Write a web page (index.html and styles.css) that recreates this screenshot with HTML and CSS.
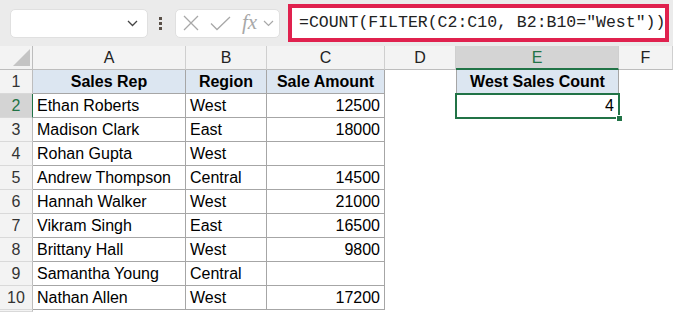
FILE: index.html
```html
<!DOCTYPE html>
<html lang="en">
<head>
  <meta charset="UTF-8">
  <meta name="viewport" content="width=device-width, initial-scale=1.0">
  <title>COUNT with FILTER</title>
  <link rel="stylesheet" href="styles.css">
</head>
<body>
  <div class="toolbar">
    <div class="name-box">
      <svg class="chev" width="11" height="7" viewBox="0 0 11 7"><path d="M1 1l4.5 4.5L10 1" fill="none" stroke="#444" stroke-width="1.3"/></svg>
    </div>
    <div class="grip"><span></span><span></span><span></span></div>
    <div class="fx-box">
      <svg width="16" height="16" viewBox="0 0 16 16"><path d="M1 1l14 14M15 1L1 15" fill="none" stroke="#a8a8a8" stroke-width="1.3"/></svg>
      <svg width="21" height="15" viewBox="0 0 21 15"><path d="M1 7.5l6 6L20 1" fill="none" stroke="#a8a8a8" stroke-width="1.3"/></svg>
      <span class="fx">fx</span>
      <svg width="11" height="7" viewBox="0 0 11 7"><path d="M1 1l4.5 4.5L10 1" fill="none" stroke="#a8a8a8" stroke-width="1.2"/></svg>
    </div>
    <div class="formula"><span class="formula-text">=COUNT(FILTER(C2:C10, B2:B10="West"))</span></div>
  </div>

  <div class="sheet">
    <div class="hdr corner"><span class="tri"></span></div>
    <div class="hdr">A</div>
    <div class="hdr">B</div>
    <div class="hdr">C</div>
    <div class="hdr">D</div>
    <div class="hdr active">E</div>
    <div class="hdr">F</div>

    <div class="rh">1</div>
    <div class="c b th">Sales Rep</div>
    <div class="c b th">Region</div>
    <div class="c b th">Sale Amount</div>
    <div class="c"></div>
    <div class="c b bl th">West Sales Count</div>
    <div class="c"></div>

    <div class="rh active">2</div>
    <div class="c b">Ethan Roberts</div>
    <div class="c b">West</div>
    <div class="c b num">12500</div>
    <div class="c"></div>
    <div class="c b bl num selected">4</div>
    <div class="c"></div>

    <div class="rh">3</div>
    <div class="c b">Madison Clark</div>
    <div class="c b">East</div>
    <div class="c b num">18000</div>
    <div class="c"></div><div class="c"></div><div class="c"></div>

    <div class="rh">4</div>
    <div class="c b">Rohan Gupta</div>
    <div class="c b">West</div>
    <div class="c b num"></div>
    <div class="c"></div><div class="c"></div><div class="c"></div>

    <div class="rh">5</div>
    <div class="c b">Andrew Thompson</div>
    <div class="c b">Central</div>
    <div class="c b num">14500</div>
    <div class="c"></div><div class="c"></div><div class="c"></div>

    <div class="rh">6</div>
    <div class="c b">Hannah Walker</div>
    <div class="c b">West</div>
    <div class="c b num">21000</div>
    <div class="c"></div><div class="c"></div><div class="c"></div>

    <div class="rh">7</div>
    <div class="c b">Vikram Singh</div>
    <div class="c b">East</div>
    <div class="c b num">16500</div>
    <div class="c"></div><div class="c"></div><div class="c"></div>

    <div class="rh">8</div>
    <div class="c b">Brittany Hall</div>
    <div class="c b">West</div>
    <div class="c b num">9800</div>
    <div class="c"></div><div class="c"></div><div class="c"></div>

    <div class="rh">9</div>
    <div class="c b">Samantha Young</div>
    <div class="c b">Central</div>
    <div class="c b num"></div>
    <div class="c"></div><div class="c"></div><div class="c"></div>

    <div class="rh">10</div>
    <div class="c b">Nathan Allen</div>
    <div class="c b">West</div>
    <div class="c b num">17200</div>
    <div class="c"></div><div class="c"></div><div class="c"></div>

    <div class="rh"></div>
  </div>
</body>
</html>
```

FILE: styles.css
```css
body {
  margin: 0;
  padding: 0;
  width: 673px;
  height: 312px;
  overflow: hidden;
  background: #fff;
  font-family: "Liberation Sans", Arial, sans-serif;
  color: #000;
}

/* formula bar strip */
.toolbar {
  height: 46px;
  background: #ebebeb;
  display: flex;
  align-items: center;
}
.name-box {
  box-sizing: border-box;
  width: 138px;
  height: 29px;
  margin-left: 10px;
  background: #fff;
  border: 1px solid #e0e0e0;
  border-radius: 5px;
  display: flex;
  align-items: center;
  justify-content: flex-end;
  padding-right: 9px;
}
.grip {
  width: 4px;
  margin: 0 12px 0 11px;
  display: flex;
  flex-direction: column;
  gap: 2px;
}
.grip span {
  width: 3px;
  height: 3px;
  background: #5a5048;
}
.fx-box {
  box-sizing: border-box;
  width: 105px;
  height: 29px;
  background: #fff;
  border: 1px solid #e0e0e0;
  border-radius: 5px;
  display: flex;
  align-items: center;
  padding-left: 7px;
}
.fx-box svg:nth-child(2) {
  margin-left: 11px;
}
.fx {
  font-family: "Liberation Serif", "Times New Roman", serif;
  font-style: italic;
  font-size: 21px;
  color: #a8a8a8;
  margin-left: 11px;
  margin-right: 6px;
  line-height: 1;
  position: relative;
  top: -1px;
}
.formula {
  box-sizing: border-box;
  width: 381px;
  height: 38px;
  margin-left: 8px;
  background: #fff;
  border: 4px solid #e0214e;
  padding-left: 7px;
  font-family: "Liberation Mono", "Courier New", monospace;
  font-size: 16.5px;
  line-height: 30px;
  color: #222;
  white-space: nowrap;
  overflow: hidden;
}

/* grid */
.sheet {
  display: grid;
  grid-template-columns: 33px 153px 81px 118px 71px 163px 54px;
  grid-template-rows: 24px repeat(10, 24px) 2px;
}
.hdr {
  box-sizing: border-box;
  background: #f3f3f3;
  border-right: 1px solid #cfcfcf;
  border-bottom: 1px solid #bdbdbd;
  text-align: center;
  font-size: 16px;
  line-height: 23px;
  color: #222;
}
.hdr.active {
  background: #d4d4d4;
  color: #217346;
  border-bottom: 2px solid #217346;
}
.corner {
  position: relative;
  border-right-color: #bdbdbd;
}
.tri {
  position: absolute;
  right: 2px;
  bottom: 3px;
  width: 0;
  height: 0;
  border-left: 17px solid transparent;
  border-bottom: 17px solid #c4c4c4;
}
.rh {
  box-sizing: border-box;
  background: #f3f3f3;
  border-right: 1px solid #bdbdbd;
  border-bottom: 1px solid #d9d9d9;
  text-align: center;
  font-size: 16px;
  line-height: 23px;
  color: #333;
}
.rh.active {
  background: #d4d4d4;
  color: #217346;
  border-right-color: #217346;
}
.c {
  box-sizing: border-box;
  padding: 0 4px;
  font-size: 16px;
  line-height: 23px;
  white-space: nowrap;
  overflow: hidden;
}
.c.b {
  border-right: 1px solid #a6a6a6;
  border-bottom: 1px solid #a6a6a6;
}
.c.bl {
  border-left: 1px solid #a6a6a6;
}
.th {
  background: #dce6f1;
  font-weight: bold;
  text-align: center;
}
.num {
  text-align: right;
}
.selected {
  position: relative;
  overflow: visible;
  outline: 2px solid #217346;
  outline-offset: -1px;
}
.selected::after {
  content: "";
  position: absolute;
  right: -4px;
  bottom: -4px;
  width: 5px;
  height: 5px;
  background: #217346;
  border: 1px solid #fff;
  border-width: 1px 0 0 1px;
}
```
